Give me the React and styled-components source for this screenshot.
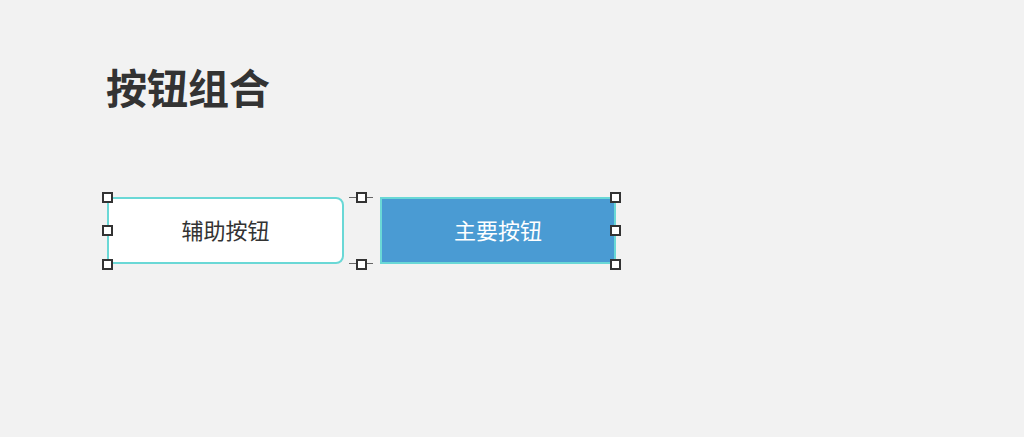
import React from "react";
import styled, { createGlobalStyle } from "styled-components";

const Global = createGlobalStyle`
  html, body { margin: 0; padding: 0; background: #f2f2f2; }
  body { font-family: "Noto Sans CJK SC", "Noto Sans", sans-serif; }
`;

const Page = styled.div`
  width: 1024px;
  height: 437px;
  box-sizing: border-box;
  padding: 59px 0 0 106px;
  display: flex;
  flex-direction: column;
  align-items: flex-start;
`;

const Title = styled.h1`
  margin: 0;
  font-size: 41px;
  line-height: 55px;
  font-weight: 700;
  color: #333333;
`;

const Group = styled.div`
  position: relative;
  margin-top: 83px;
  margin-left: 1px;
  display: flex;
  gap: 36px;
`;

const Button = styled.div`
  box-sizing: border-box;
  width: ${(p) => p.$w}px;
  height: 67px;
  padding-bottom: 3px;
  display: flex;
  align-items: center;
  justify-content: center;
  font-size: 22px;
  border: 2px solid #6ad8d6;
  background: ${(p) => (p.$primary ? "#4a9bd3" : "#ffffff")};
  color: ${(p) => (p.$primary ? "#ffffff" : "#333333")};
  border-radius: ${(p) => (p.$primary ? "0" : "0 8px 8px 0")};
`;

const Handle = styled.span`
  position: absolute;
  left: ${(p) => p.$x - 5.5}px;
  top: ${(p) => p.$y - 5.5}px;
  width: 11px;
  height: 11px;
  box-sizing: border-box;
  border: 2px solid #333333;
  background: #ffffff;
  z-index: 2;
`;

const Tick = styled.span`
  position: absolute;
  left: ${(p) => p.$x}px;
  top: ${(p) => p.$y}px;
  width: 7px;
  height: 1px;
  background: #666666;
`;

const W = 508;
const H = 67;

export default function App() {
  const handles = [
    [0, 0], [0, H / 2], [0, H],
    [W / 2, 0], [W / 2, H],
    [W, 0], [W, H / 2], [W, H],
  ];
  return (
    <>
      <Global />
      <Page>
        <Title>按钮组合</Title>
        <Group>
          <Button $w={237}>辅助按钮</Button>
          <Button $w={236} $primary>主要按钮</Button>
          {[0, H - 1].map((y) => (
            <React.Fragment key={y}>
              <Tick $x={W / 2 - 12} $y={y} />
              <Tick $x={W / 2 + 5} $y={y} />
            </React.Fragment>
          ))}
          {handles.map(([x, y], i) => (
            <Handle key={i} $x={x} $y={y} />
          ))}
        </Group>
      </Page>
    </>
  );
}
